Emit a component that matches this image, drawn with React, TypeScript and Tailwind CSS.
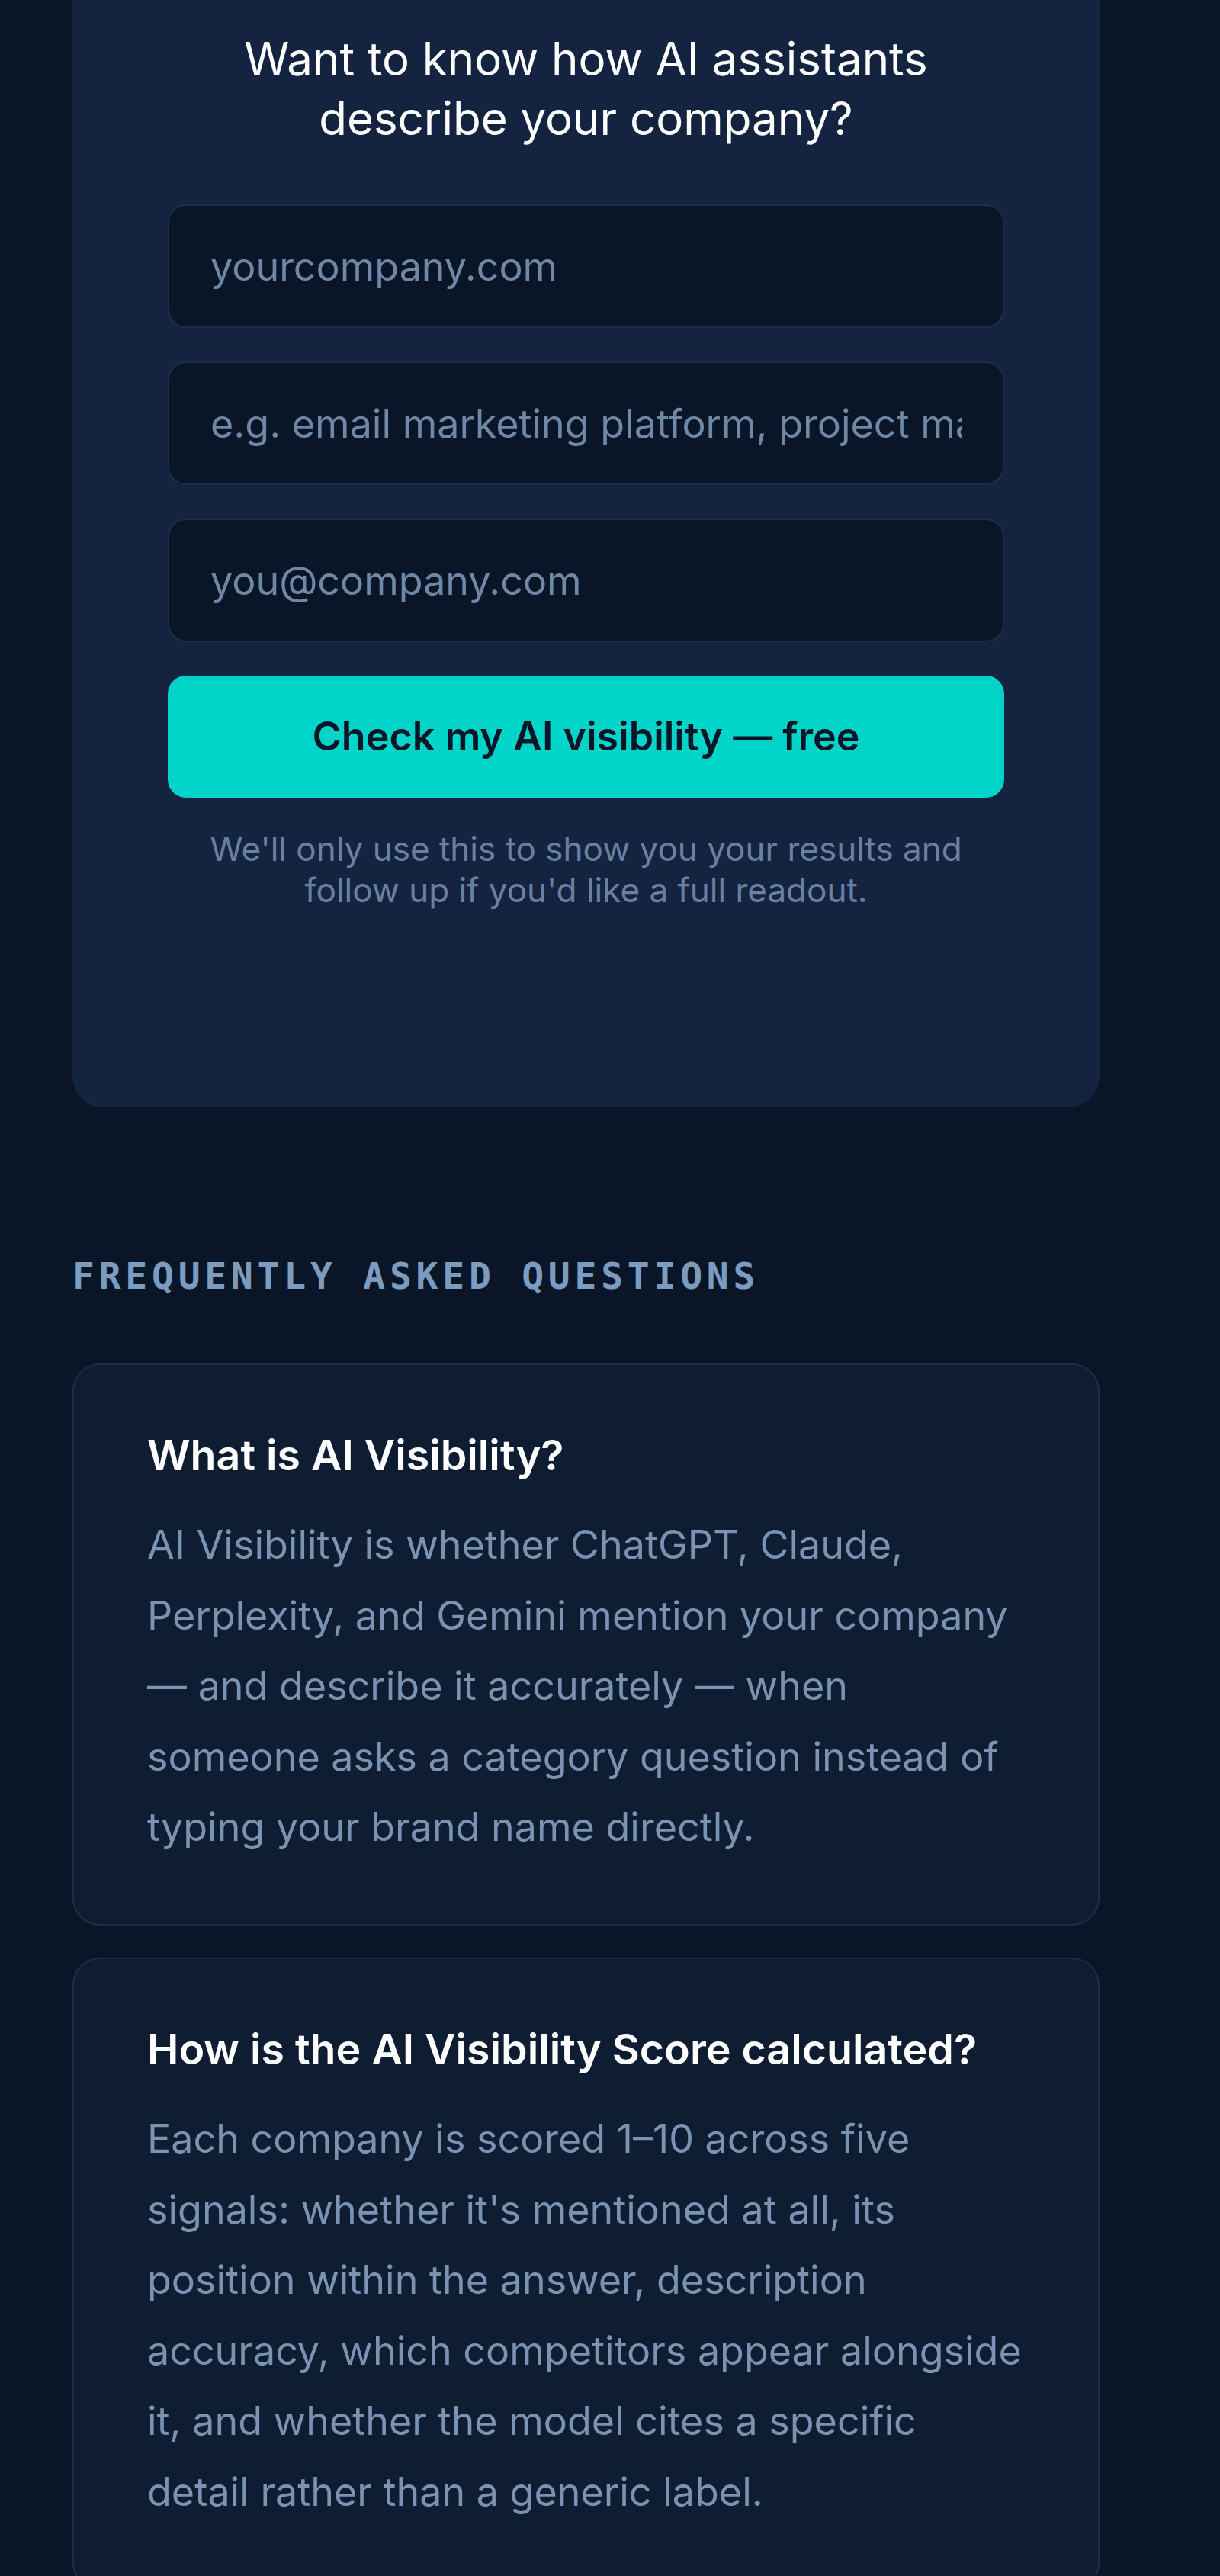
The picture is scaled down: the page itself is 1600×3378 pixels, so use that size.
import type { ReactNode } from 'react';

const faqs = [
  {
    q: 'What is AI Visibility?',
    a: [
      'AI Visibility is whether ChatGPT, Claude,',
      'Perplexity, and Gemini mention your company',
      '— and describe it accurately — when',
      'someone asks a category question instead of',
      'typing your brand name directly.',
    ],
  },
  {
    q: 'How is the AI Visibility Score calculated?',
    a: [
      'Each company is scored 1–10 across five',
      "signals: whether it's mentioned at all, its",
      'position within the answer, description',
      'accuracy, which competitors appear alongside',
      'it, and whether the model cites a specific',
      'detail rather than a generic label.',
    ],
  },
];

function Field({ placeholder, type = 'text' }: { placeholder: string; type?: string }) {
  return (
    <input
      type={type}
      placeholder={placeholder}
      className="h-[162px] w-full rounded-[24px] border-2 border-[#1d2d4a] bg-[#0a1528] px-[54px] text-[52px] text-white outline-none placeholder:text-[#6f88a8]"
    />
  );
}

// answer text keeps the original line breaks
function Lines({ lines }: { lines: string[] }) {
  return (
    <>
      {lines.map((l, i) => (
        <span key={i}>
          {l}
          {i < lines.length - 1 && <br />}
        </span>
      ))}
    </>
  );
}

function FaqCard({ q, children }: { q: string; children: ReactNode }) {
  return (
    <div className="rounded-[36px] border-2 border-[#1b2e4a] bg-[#0f1d32] px-[96px] pt-[84px] pb-[80px]">
      <h3 className="text-[55.5px] font-semibold leading-[68px] text-white">{q}</h3>
      <p className="mt-[38px] whitespace-nowrap text-[52px] leading-[92.6px] text-[#7a93b3]">{children}</p>
    </div>
  );
}

export default function App() {
  return (
    <div className="min-h-screen bg-[#0a1628] pl-[95px] font-['Inter',sans-serif]">
      <div className="w-[1347px]">
        {/* Signup card */}
        <section className="rounded-b-[40px] bg-[#14233f] px-[125px] pt-[38px] pb-[258px]">
          <h2 className="text-center text-[60px] leading-[78px] text-white">
            Want to know how AI assistants
            <br />
            describe your company?
          </h2>
          <form className="mt-[74px] flex flex-col gap-[44px]" onSubmit={(e) => e.preventDefault()}>
            <Field placeholder="yourcompany.com" />
            <Field placeholder="e.g. email marketing platform, project management tool" />
            <Field placeholder="you@company.com" type="email" />
            <button
              type="submit"
              className="h-[160px] w-full rounded-[24px] bg-[#00d3c7] text-[52px] font-semibold text-[#0a1628]"
            >
              Check my AI visibility — free
            </button>
          </form>
          <p className="mt-[40px] text-center text-[44px] leading-[54px] text-[#6881a2]">
            We'll only use this to show you your results and
            <br />
            follow up if you'd like a full readout.
          </p>
        </section>

        {/* FAQ */}
        <section className="pt-[185px]">
          <h2 className="font-['DejaVu_Sans_Mono',monospace] text-[48px] font-bold uppercase leading-[72px] tracking-[0.12em] text-[#7c9cbf]">
            Frequently asked questions
          </h2>
          <div className="mt-[79px] flex flex-col gap-[42px]">
            {faqs.map((f) => (
              <FaqCard key={f.q} q={f.q}>
                <Lines lines={f.a} />
              </FaqCard>
            ))}
          </div>
        </section>
      </div>
    </div>
  );
}
